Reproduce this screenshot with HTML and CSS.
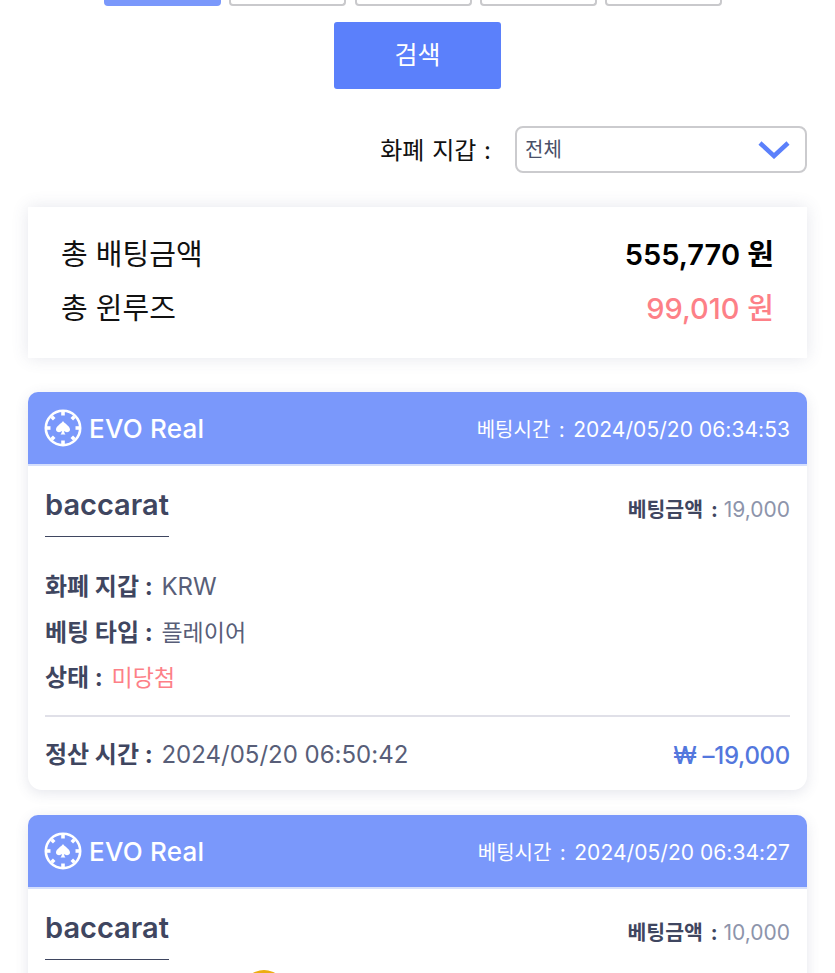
FILE: index.html
```html
<!DOCTYPE html>
<html lang="ko">
<head>
    <meta charset="UTF-8">
    <meta name="viewport" content="width=device-width, initial-scale=1.0">
    <title>베팅 내역</title>
    <link rel="stylesheet" href="styles.css">
</head>
<body>
    <div class="page">
        <div class="tabs">
            <div class="tab active"></div>
            <div class="tab"></div>
            <div class="tab"></div>
            <div class="tab"></div>
            <div class="tab"></div>
        </div>
        <button class="search-btn">검색</button>

        <div class="wallet-filter">
            <span class="wallet-label">화폐 지갑 :</span>
            <div class="select">
                <span>전체</span>
                <svg class="chevron" width="34" height="20" viewBox="0 0 34 20"><path d="M3 4 L17 17 L31 4" fill="none" stroke="#5b80fb" stroke-width="4.5"/></svg>
            </div>
        </div>

        <div class="summary">
            <div class="summary-row">
                <span>총 배팅금액</span>
                <span class="summary-total">555,770 원</span>
            </div>
            <div class="summary-row">
                <span>총 윈루즈</span>
                <span class="summary-win">99,010 원</span>
            </div>
        </div>

        <div class="card">
            <div class="card-head">
                <div class="brand">
                    <svg class="chip" width="38" height="38" viewBox="0 0 38 38">
                        <circle cx="19" cy="19" r="17.2" fill="none" stroke="#fff" stroke-width="2.6"/>
                        <g stroke="#fff" stroke-width="3.6">
                            <path d="M19 3V6.5"/><path d="M19 31.5V35"/><path d="M3 19H6.5"/><path d="M31.5 19H35"/>
                            <path d="M7.7 7.7L10.2 10.2"/><path d="M27.8 27.8L30.3 30.3"/><path d="M30.3 7.7L27.8 10.2"/><path d="M10.2 27.8L7.7 30.3"/>
                        </g>
                        <path d="M19 12C20.5 14.5 26 17 26 20.5C26 23.3 22 24 20 22C20.2 23.6 20.7 24.8 21.6 25.6H16.4C17.3 24.8 17.8 23.6 18 22C16 24 12 23.3 12 20.5C12 17 17.5 14.5 19 12Z" fill="#fff"/>
                    </svg>
                    <span>EVO Real</span>
                </div>
                <span class="bet-time"><span class="bet-time-label">베팅시간</span> : <span class="bet-time-date">2024/05/20 06:34:53</span></span>
            </div>
            <div class="card-body">
                <div class="game-row">
                    <div class="game-name">baccarat</div>
                    <div class="bet-amount"><b>베팅금액 :</b> <span>19,000</span></div>
                </div>
                <div class="info-list">
                    <div class="info-line"><b>화폐 지갑 :</b> KRW</div>
                    <div class="info-line"><b>베팅 타입 :</b> <span class="info-word">플레이어</span></div>
                    <div class="info-line"><b>상태 :</b> <span class="info-word lose">미당첨</span></div>
                </div>
                <div class="settle-row">
                    <div class="info-line"><b>정산 시간 :</b> 2024/05/20 06:50:42</div>
                    <div class="settle-amount">₩ –19,000</div>
                </div>
            </div>
        </div>

        <div class="card">
            <div class="card-head">
                <div class="brand">
                    <svg class="chip" width="38" height="38" viewBox="0 0 38 38">
                        <circle cx="19" cy="19" r="17.2" fill="none" stroke="#fff" stroke-width="2.6"/>
                        <g stroke="#fff" stroke-width="3.6">
                            <path d="M19 3V6.5"/><path d="M19 31.5V35"/><path d="M3 19H6.5"/><path d="M31.5 19H35"/>
                            <path d="M7.7 7.7L10.2 10.2"/><path d="M27.8 27.8L30.3 30.3"/><path d="M30.3 7.7L27.8 10.2"/><path d="M10.2 27.8L7.7 30.3"/>
                        </g>
                        <path d="M19 12C20.5 14.5 26 17 26 20.5C26 23.3 22 24 20 22C20.2 23.6 20.7 24.8 21.6 25.6H16.4C17.3 24.8 17.8 23.6 18 22C16 24 12 23.3 12 20.5C12 17 17.5 14.5 19 12Z" fill="#fff"/>
                    </svg>
                    <span>EVO Real</span>
                </div>
                <span class="bet-time"><span class="bet-time-label">베팅시간</span> : <span class="bet-time-date">2024/05/20 06:34:27</span></span>
            </div>
            <div class="card-body">
                <div class="game-row">
                    <div class="game-name">baccarat</div>
                    <div class="bet-amount"><b>베팅금액 :</b> <span>10,000</span></div>
                </div>
                <div class="coin"></div>
            </div>
        </div>
    </div>
</body>
</html>
```

FILE: styles.css
```css
html, body {
    margin: 0;
    height: 973px;
    overflow: hidden;
    background-color: #fff;
}
body {
    font-family: Inter, "Noto Sans CJK KR", sans-serif;
    color: #4a5068;
}
.page {
    padding: 0 28px;
}
.tabs {
    display: flex;
    justify-content: center;
    gap: 8.25px;
    height: 6px;
    padding-right: 9px;
}
.tab {
    box-sizing: border-box;
    width: 117px;
    height: 6px;
    background-color: #fff;
    border: 2px solid #c9c9cc;
    border-top: none;
    border-radius: 0 0 4px 4px;
}
.tab.active {
    background-color: #7a98fb;
    border: none;
}
.search-btn {
    display: block;
    width: 167px;
    height: 67px;
    margin: 16px auto 0;
    padding: 0 0 6px;
    font-family: inherit;
    font-size: 25px;
    color: #fff;
    background-color: #5b80fb;
    border: none;
    border-radius: 3px;
}
.wallet-filter {
    display: flex;
    justify-content: flex-end;
    align-items: center;
    gap: 24px;
    margin-top: 37px;
}
.wallet-label {
    padding-bottom: 3px;
    font-size: 24px;
    word-spacing: 1px;
    color: #111;
}
.select {
    box-sizing: border-box;
    display: flex;
    justify-content: space-between;
    align-items: center;
    width: 292px;
    height: 47px;
    padding: 0 14px 2px 8px;
    font-size: 20px;
    color: #4a5068;
    border: 2px solid #cbcbce;
    border-radius: 8px;
}
.summary {
    display: flex;
    flex-direction: column;
    gap: 10px;
    height: 151px;
    box-sizing: border-box;
    margin-top: 34px;
    padding: 23px 33px 0;
    background-color: #fff;
    box-shadow: 0 0 16px rgba(70, 80, 120, 0.14);
}
.summary-row {
    display: flex;
    justify-content: space-between;
    align-items: center;
    height: 44px;
    font-size: 29px;
    color: #111;
}
.summary-total {
    font-weight: 600;
    color: #000;
}
.summary-win {
    font-weight: 500;
    color: #fd8087;
}
.card {
    margin-top: 34px;
    border-radius: 14px;
    background-color: #fff;
    box-shadow: 0 3px 14px rgba(70, 80, 120, 0.14);
}
.card + .card {
    margin-top: 25px;
}
.card-head {
    display: flex;
    justify-content: space-between;
    align-items: center;
    height: 74px;
    box-sizing: border-box;
    padding: 0 17px;
    color: #fff;
    background-color: #7a98fb;
    border-bottom: 2px solid #d5dffc;
    border-radius: 10px 10px 0 0;
}
.brand {
    display: flex;
    align-items: center;
    gap: 7px;
    font-size: 26px;
    font-weight: 500;
    letter-spacing: 0.25px;
}
.chip {
    margin-left: -1px;
}
.bet-time {
    font-size: 21px;
    word-spacing: 2.5px;
}
.bet-time-label {
    margin-left: -1px;
    font-size: 20px;
}
.bet-time-date {
    letter-spacing: 0.05px;
    word-spacing: 0;
}
.card-body {
    padding: 0 17px;
}
.game-row {
    display: flex;
    justify-content: space-between;
    align-items: center;
    padding-top: 19px;
}
.game-name {
    padding-bottom: 11px;
    font-size: 29px;
    font-weight: 600;
    line-height: 40px;
    color: #3f4660;
    border-bottom: 1px solid #3f4660;
}
.bet-amount {
    margin-bottom: 6px;
    font-size: 21px;
}
.bet-amount b {
    font-size: 20.5px;
    font-weight: 700;
    word-spacing: 3px;
    color: #3f4660;
}
.bet-amount span {
    color: #8d94ab;
}
.info-list {
    display: flex;
    flex-direction: column;
    gap: 10.5px;
    padding: 32px 0 20px;
    border-bottom: 2px solid #e0e0e8;
}
.info-line {
    height: 35px;
    font-size: 24px;
    line-height: 35px;
    color: #585e78;
}
.info-line b {
    margin-right: 2px;
    font-weight: 700;
    color: #3f4660;
}
.info-word {
    font-size: 23px;
}
.lose {
    color: #fd8087;
}
.settle-row {
    display: flex;
    justify-content: space-between;
    align-items: center;
    height: 73px;
    padding-top: 1px;
    box-sizing: border-box;
}
.settle-amount {
    padding-top: 2px;
    font-size: 24px;
    font-weight: 500;
    letter-spacing: -0.3px;
    color: #5377dd;
}
.coin {
    width: 44px;
    height: 44px;
    margin: 10px 0 0 197px;
    border-radius: 50%;
    background-color: #ecad10;
}
```
